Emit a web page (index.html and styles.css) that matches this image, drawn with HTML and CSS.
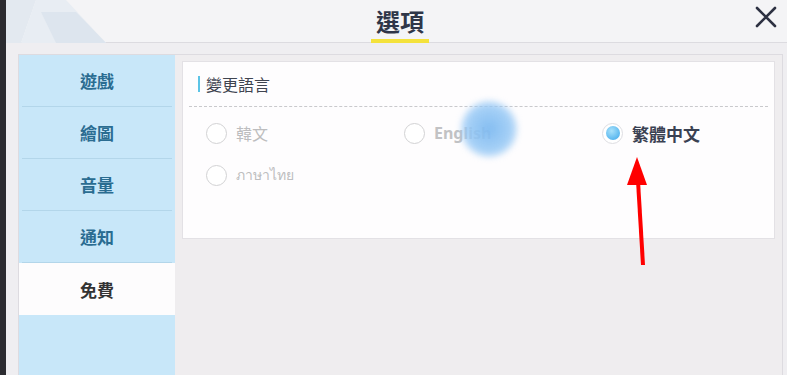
FILE: index.html
```html
<!DOCTYPE html>
<html lang="zh-Hant">
<head>
  <meta charset="UTF-8" />
  <meta name="viewport" content="width=device-width, initial-scale=1.0" />
  <title>選項</title>
  <link rel="stylesheet" href="styles.css">
</head>
<body>
  <div class="screen">
    <div class="edge"></div>
    <div class="main">
      <header class="topbar">
        <svg class="deco" width="120" height="43" viewBox="0 0 120 43">
          <polygon points="0,0 30,0 15,43 0,43" fill="#e3e9f0" />
          <polygon points="30,0 60,0 100,43 15,43" fill="#e8edf3" />
          <polygon points="35,12 70,12 100,43 50,43" fill="#dde5ee" />
        </svg>
        <div class="title">選項</div>
        <svg class="close" width="24" height="24" viewBox="0 0 24 24">
          <path d="M3 3 L21 21 M21 3 L3 21" stroke="#2d3142" stroke-width="2.6" stroke-linecap="round" />
        </svg>
      </header>

      <div class="panel">
        <nav class="sidebar">
          <div class="tab">遊戲</div>
          <div class="tab">繪圖</div>
          <div class="tab">音量</div>
          <div class="tab">通知</div>
          <div class="tab active">免費</div>
        </nav>

        <div class="content">
          <div class="card">
            <div class="card-title"><span class="bar"></span>變更語言</div>
            <div class="options">
              <label class="opt"><span class="radio"></span>韓文</label>
              <label class="opt"><span class="radio"></span><b>English</b></label>
              <label class="opt on"><span class="radio"></span>繁體中文</label>
              <label class="opt thai"><span class="radio"></span>ภาษาไทย</label>
            </div>
          </div>
        </div>
      </div>
    </div>
  </div>

  <div class="touch"></div>

  <svg class="arrow" width="40" height="120" viewBox="0 0 40 120">
    <line x1="26" y1="110" x2="21" y2="26" stroke="#f00" stroke-width="4" />
    <polygon points="20,2 10,30 30,30" fill="#f00" />
  </svg>
</body>
</html>
```

FILE: styles.css
```css
body {
  margin: 0;
  padding: 0;
  width: 787px;
  height: 375px;
  overflow: hidden;
  background: #efeef1;
  font-family: "Noto Sans CJK TC", "Noto Sans", sans-serif;
  position: relative;
}
.screen { display: flex; height: 375px; }
.edge { width: 6px; background: #2b2b30; flex: none; }
.main { flex: 1; display: flex; flex-direction: column; }

.topbar {
  height: 42px;
  border-bottom: 1px solid #dcdbe0;
  background: #f4f4f6;
  position: relative;
  display: flex;
  justify-content: center;
  align-items: flex-end;
}
.deco { position: absolute; left: 0; top: 0; }
.title {
  font-size: 24px;
  font-weight: bold;
  color: #2f3648;
  line-height: 36px;
  padding: 0 5px;
  border-bottom: 4px solid #f4e23c;
  margin-left: 7px;
  margin-bottom: -1px;
}
.close { position: absolute; right: 9px; top: 5px; }

.panel {
  margin: 11px 4px 0 12px;
  flex: 1;
  display: flex;
  border: 1px solid #dddbe0;
  border-bottom: none;
  background: #efedef;
}
.sidebar {
  width: 156px;
  background: #c8e7f9;
  display: flex;
  flex-direction: column;
}
.tab {
  height: 51px;
  margin: 0 3px;
  border-bottom: 1px solid #b3d6ea;
  display: flex;
  align-items: center;
  justify-content: center;
  font-size: 17px;
  font-weight: bold;
  color: #2a6c91;
}
.tab.active {
  background: #fdfcfd;
  color: #333;
  margin: 0;
  border-bottom: none;
  height: 52px;
}

.content { flex: 1; padding: 6px 7px 0 7px; }
.card {
  height: 176px;
  background: #fefdfe;
  border: 1px solid #e3e1e5;
  padding: 0 6px;
}
.card-title {
  height: 44px;
  border-bottom: 1px dashed #c9c9cc;
  display: flex;
  align-items: center;
  font-size: 16px;
  color: #3f4450;
  padding-left: 9px;
}
.bar {
  width: 2px;
  height: 16px;
  background: #5cc4e6;
  margin-right: 6px;
}
.options {
  display: grid;
  grid-template-columns: 198px 198px 1fr;
  padding: 5px 0 0 17px;
}
.opt {
  height: 42px;
  display: flex;
  align-items: center;
  font-size: 16px;
  color: #bdbdbf;
}
.opt b { font-family: "Noto Sans", sans-serif; color: #c2c2c4; }
.thai { font-size: 14px; }
.radio {
  width: 19px;
  height: 19px;
  border: 1.5px solid #d2d2d4;
  border-radius: 50%;
  margin-right: 9px;
  box-sizing: content-box;
  background: #fff;
  display: flex;
  align-items: center;
  justify-content: center;
}
.on { color: #3a4152; font-weight: bold; font-size: 17px; }
.on .radio { border-color: #dedee2; }
.on .radio::after {
  content: "";
  width: 14px;
  height: 14px;
  border-radius: 50%;
  background: radial-gradient(circle at 40% 35%, #a9e2fb, #3aa6ea);
}

.touch {
  position: absolute;
  left: 461px;
  top: 101px;
  width: 56px;
  height: 56px;
  border-radius: 50%;
  background: radial-gradient(circle, rgba(125,185,240,0.95), rgba(150,200,245,0.85) 55%, rgba(185,218,250,0));
  filter: blur(3px);
}
.arrow { position: absolute; left: 617px; top: 155px; }
```
